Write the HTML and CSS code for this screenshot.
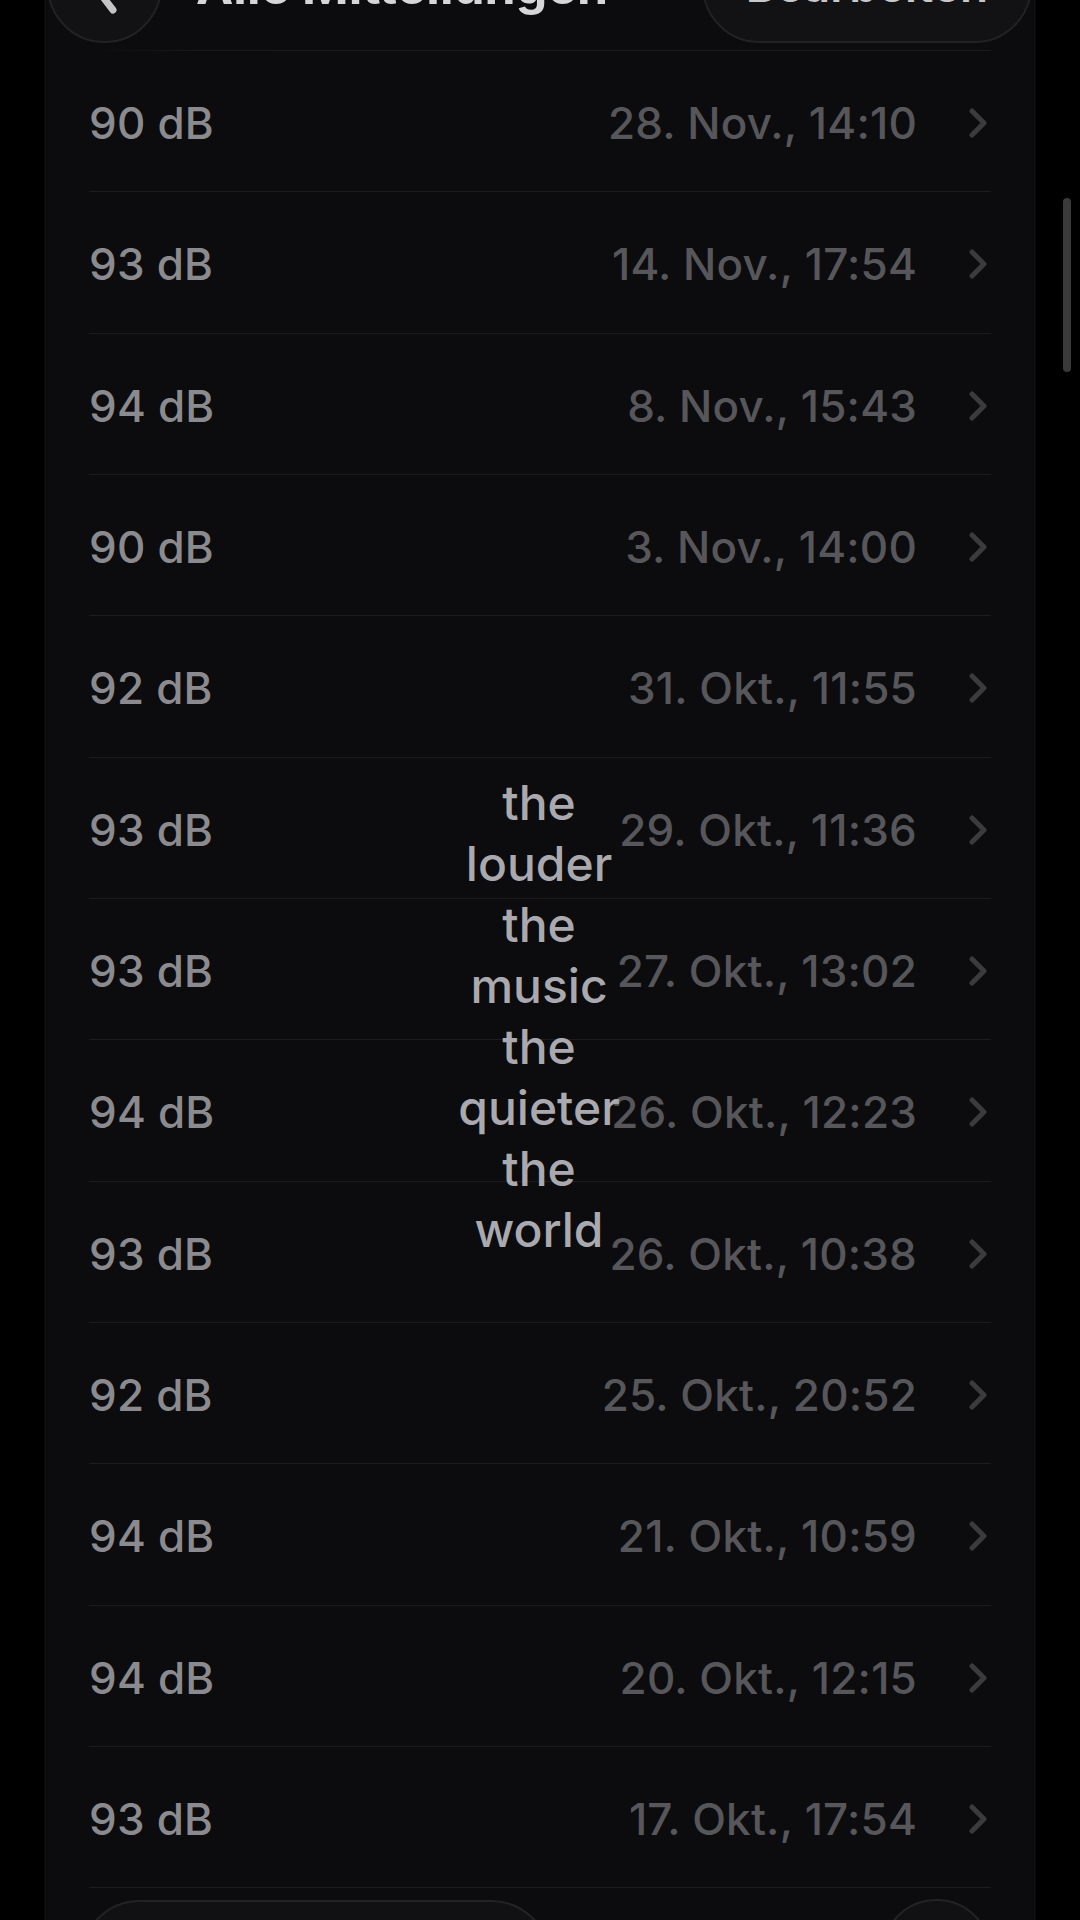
FILE: index.html
```html
<!DOCTYPE html>
<html lang="de">
<head>
<meta charset="utf-8">
<title>Mitteilungen</title>
<link rel="stylesheet" href="styles.css">
</head>
<body>
<div class="screen">
  <div class="panel">
    <div class="list">
      <div class="row"><span class="db">90 dB</span><span class="date">28. Nov., 14:10</span><svg class="chev" viewBox="0 0 18 30"><path d="M3 3 L15 15 L3 27"/></svg></div>
      <div class="row"><span class="db">93 dB</span><span class="date">14. Nov., 17:54</span><svg class="chev" viewBox="0 0 18 30"><path d="M3 3 L15 15 L3 27"/></svg></div>
      <div class="row"><span class="db">94 dB</span><span class="date">8. Nov., 15:43</span><svg class="chev" viewBox="0 0 18 30"><path d="M3 3 L15 15 L3 27"/></svg></div>
      <div class="row"><span class="db">90 dB</span><span class="date">3. Nov., 14:00</span><svg class="chev" viewBox="0 0 18 30"><path d="M3 3 L15 15 L3 27"/></svg></div>
      <div class="row"><span class="db">92 dB</span><span class="date">31. Okt., 11:55</span><svg class="chev" viewBox="0 0 18 30"><path d="M3 3 L15 15 L3 27"/></svg></div>
      <div class="row"><span class="db">93 dB</span><span class="date">29. Okt., 11:36</span><svg class="chev" viewBox="0 0 18 30"><path d="M3 3 L15 15 L3 27"/></svg></div>
      <div class="row"><span class="db">93 dB</span><span class="date">27. Okt., 13:02</span><svg class="chev" viewBox="0 0 18 30"><path d="M3 3 L15 15 L3 27"/></svg></div>
      <div class="row"><span class="db">94 dB</span><span class="date">26. Okt., 12:23</span><svg class="chev" viewBox="0 0 18 30"><path d="M3 3 L15 15 L3 27"/></svg></div>
      <div class="row"><span class="db">93 dB</span><span class="date">26. Okt., 10:38</span><svg class="chev" viewBox="0 0 18 30"><path d="M3 3 L15 15 L3 27"/></svg></div>
      <div class="row"><span class="db">92 dB</span><span class="date">25. Okt., 20:52</span><svg class="chev" viewBox="0 0 18 30"><path d="M3 3 L15 15 L3 27"/></svg></div>
      <div class="row"><span class="db">94 dB</span><span class="date">21. Okt., 10:59</span><svg class="chev" viewBox="0 0 18 30"><path d="M3 3 L15 15 L3 27"/></svg></div>
      <div class="row"><span class="db">94 dB</span><span class="date">20. Okt., 12:15</span><svg class="chev" viewBox="0 0 18 30"><path d="M3 3 L15 15 L3 27"/></svg></div>
      <div class="row"><span class="db">93 dB</span><span class="date">17. Okt., 17:54</span><svg class="chev" viewBox="0 0 18 30"><path d="M3 3 L15 15 L3 27"/></svg></div>
    </div>
  </div>

  <div class="back-btn">
    <svg class="back-icon" viewBox="0 0 40 60"><path d="M28 4 L8 30 L28 56"/></svg>
  </div>
  <div class="title">Alle Mitteilungen</div>
  <div class="edit-btn"><span>Bearbeiten</span></div>

  <div class="scroll-indicator"></div>

  <div class="caption">the louder the music the quieter the world</div>

  <div class="tab-pill"></div>
  <div class="tab-circle"></div>
</div>
</body>
</html>
```

FILE: styles.css
```css
* { box-sizing: border-box; }

html, body {
  margin: 0;
  padding: 0;
  background: #000;
}

.screen {
  position: relative;
  width: 1080px;
  height: 1920px;
  overflow: hidden;
  background: #000;
  font-family: Inter, "Noto Sans", "Liberation Sans", sans-serif;
}

.panel {
  margin: 0 44px;
  height: 100%;
  background: #0c0c0e;
  overflow: hidden;
}

.list {
  padding-top: 50px;
}

.list::before {
  content: "";
  display: block;
  height: 1px;
  margin: 0 45px;
  background: linear-gradient(90deg, rgba(30,30,32,0) 0%, #19191b 12%, #1b1b1d 100%);
}

.row {
  display: flex;
  align-items: center;
  height: 141.33px;
  margin: 0 45px;
  padding-top: 4px;
  border-bottom: 1px solid #1c1c1e;
}

.db {
  flex: 1;
  font-size: 44px;
  font-weight: 500;
  color: #8b8b8f;
  letter-spacing: 0.2px;
}

.date {
  font-size: 44px;
  font-weight: 500;
  color: #57575b;
  letter-spacing: 0.2px;
}

.chev {
  width: 18px;
  height: 30px;
  margin-left: 52px;
  margin-right: 4px;
  fill: none;
  stroke: #3b3b3e;
  stroke-width: 5px;
  stroke-linecap: round;
  stroke-linejoin: round;
}

.back-btn {
  position: absolute;
  left: 47px;
  top: -72px;
  width: 115px;
  height: 115px;
  border-radius: 50%;
  background: #121214;
  border: 2px solid #222224;
}

.back-icon {
  position: absolute;
  left: 36px;
  top: 24px;
  width: 40px;
  height: 60px;
  fill: none;
  stroke: #c4c4c6;
  stroke-width: 7px;
  stroke-linecap: round;
  stroke-linejoin: round;
}

.title {
  position: absolute;
  left: 196px;
  top: -44px;
  font-size: 50px;
  line-height: 60px;
  font-weight: 700;
  color: #d6d6d8;
}

.edit-btn {
  position: absolute;
  left: 702px;
  top: -72px;
  width: 330px;
  height: 115px;
  border-radius: 58px;
  background: #121214;
  border: 2px solid #222224;
  display: flex;
  justify-content: center;
}

.edit-btn span {
  margin-top: 30px;
  font-size: 46px;
  line-height: 50px;
  font-weight: 600;
  color: #c8c8ca;
}

.scroll-indicator {
  position: absolute;
  left: 1063px;
  top: 198px;
  width: 8px;
  height: 174px;
  border-radius: 4px;
  background: #3a3a3b;
}

.caption {
  position: absolute;
  left: 539px;
  top: 772px;
  transform: translateX(-50%);
  width: min-content;
  text-align: center;
  font-size: 48px;
  line-height: 61px;
  font-weight: 500;
  color: #a9a9af;
}

.tab-pill {
  position: absolute;
  left: 80px;
  top: 1900px;
  width: 471px;
  height: 120px;
  border-radius: 60px;
  background: #111113;
  border: 2px solid #232325;
}

.tab-circle {
  position: absolute;
  left: 881px;
  top: 1899px;
  width: 111px;
  height: 111px;
  border-radius: 50%;
  background: #111113;
  border: 2px solid #232325;
}
```
